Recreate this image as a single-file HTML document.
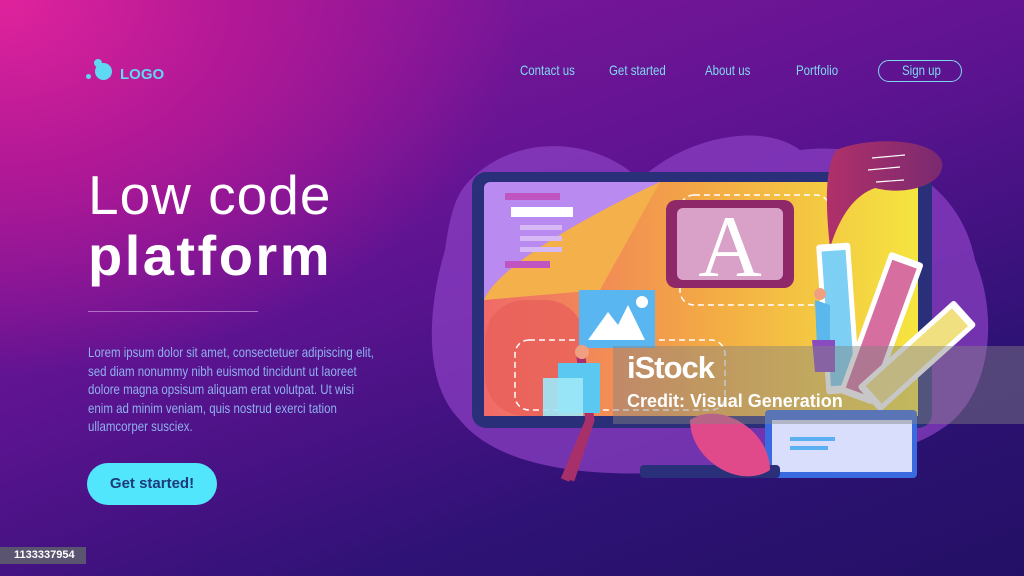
<!DOCTYPE html>
<html><head><meta charset="utf-8"><style>
*{margin:0;padding:0;box-sizing:border-box}
body{width:1024px;height:576px;overflow:hidden;position:relative;font-family:"Liberation Sans",sans-serif;
background:radial-gradient(ellipse 700px 500px at 0 0,#e0239c 0%,#b01896 35%,rgba(110,20,150,0) 75%),linear-gradient(160deg,#8a189e 0%,#5c1390 45%,#2e1275 75%,#231065 100%);}
.a{position:absolute}
.nav{color:#7fd8f0;font-size:14px;top:62px}
.cond{transform-origin:0 0;transform:scaleX(.82);white-space:nowrap}
</style></head><body>
<!-- logo -->
<div class="a" style="left:86px;top:74px;width:5px;height:5px;border-radius:50%;background:#5fd8f4"></div>
<div class="a" style="left:94px;top:59px;width:8px;height:8px;border-radius:50%;background:#5fd8f4"></div>
<div class="a" style="left:95px;top:63px;width:17px;height:17px;border-radius:50%;background:#5fd8f4"></div>
<div class="a" style="left:120px;top:66px;color:#5fd8f4;font-size:15px;font-weight:bold">LOGO</div>
<!-- nav -->
<div class="a nav cond" style="left:520px">Contact us</div>
<div class="a nav cond" style="left:609px">Get started</div>
<div class="a nav cond" style="left:705px">About us</div>
<div class="a nav cond" style="left:796px">Portfolio</div>
<div class="a" style="left:878px;top:60px;width:84px;height:22px;border:1.5px solid #7fd8f0;border-radius:11px"></div>
<div class="a nav cond" style="left:902px">Sign up</div>
<!-- hero -->
<div class="a" style="left:88px;top:165px;color:#fff;font-size:55px;font-weight:300;line-height:60px;letter-spacing:1px">Low code</div>
<div class="a" style="left:88px;top:226px;color:#fff;font-size:56px;font-weight:bold;line-height:60px;letter-spacing:2.5px">platform</div>
<div class="a" style="left:88px;top:311px;width:170px;height:1px;background:#b070c8"></div>
<div class="a cond" style="left:88px;top:343px;color:#8fb0ee;font-size:14px;line-height:18.5px;">Lorem ipsum dolor sit amet, consectetuer adipiscing elit,<br>sed diam nonummy nibh euismod tincidunt ut laoreet<br>dolore magna opsisum aliquam erat volutpat. Ut wisi<br>enim ad minim veniam, quis nostrud exerci tation<br>ullamcorper susciex.</div>
<div class="a" style="left:87px;top:463px;width:130px;height:42px;border-radius:21px;background:#52e6fc;color:#1d3a7a;font-weight:bold;font-size:15px;text-align:center;line-height:42px">Get started!</div>
<div class="a" style="left:0;top:547px;width:86px;height:17px;background:#5a5470;color:#fff;font-size:11px;font-weight:bold;line-height:17px;padding-left:14px">1133337954</div>
<!-- illustration -->
<svg class="a" style="left:0;top:0" width="1024" height="576" viewBox="0 0 1024 576">
<defs><linearGradient id="g1" x1="0" y1="0" x2="1" y2="0"><stop offset="0" stop-color="#f06a6a"/><stop offset=".5" stop-color="#f3a845"/><stop offset="1" stop-color="#f5e540"/></linearGradient>
<linearGradient id="g2" x1="0" y1="0" x2="1" y2="0"><stop offset="0" stop-color="#b0306a"/><stop offset="1" stop-color="#7a2a70"/></linearGradient></defs>
<path d="M470 180 C520 130 600 140 640 180 C680 140 760 120 800 150 C880 140 960 180 975 260 C1000 320 990 400 940 430 C880 470 780 460 700 470 C600 480 500 470 460 420 C420 380 430 300 445 250 C450 215 455 195 470 180Z" fill="#8a3fc2" opacity=".75"/>
<rect x="472" y="172" width="460" height="256" rx="14" fill="#2a2f7a"/>
<rect x="484" y="182" width="434" height="234" rx="6" fill="#b98af0"/>
<path d="M660 182 L918 182 L918 416 L484 416 L484 300 Z" fill="url(#g1)"/>
<path d="M484 300 C500 260 620 200 660 182 L600 290 Z" fill="#f4b04a"/>
<rect x="505" y="193" width="55" height="7" fill="#c054c0"/>
<rect x="511" y="207" width="62" height="10" fill="#fff"/>
<rect x="520" y="225" width="42" height="5" fill="#d6b8f5"/><rect x="520" y="236" width="42" height="5" fill="#d6b8f5"/><rect x="520" y="247" width="42" height="5" fill="#d6b8f5"/>
<rect x="505" y="261" width="45" height="7" fill="#c054c0"/>
<rect x="485" y="300" width="100" height="116" rx="40" fill="#e8605a" opacity=".8"/>
<rect x="680" y="195" width="150" height="110" rx="14" fill="none" stroke="#fff" stroke-dasharray="6 4" stroke-width="1.5"/>
<rect x="515" y="340" width="210" height="70" rx="14" fill="none" stroke="#fff" stroke-dasharray="6 4" stroke-width="1.5"/>
<rect x="666" y="200" width="128" height="88" rx="10" fill="#8e2868"/>
<rect x="677" y="208" width="106" height="72" rx="6" fill="#d9a0c8"/>
<text x="730" y="276" font-family="Liberation Serif,serif" font-size="88" fill="#fff" text-anchor="middle">A</text>
<rect x="579" y="290" width="76" height="58" fill="#59b6f0"/>
<path d="M588 340 L608 312 L618 325 L628 305 L645 340Z" fill="#fff"/><circle cx="642" cy="302" r="6" fill="#fff"/>
<path d="M836 150 C870 136 935 138 942 162 C946 185 905 196 875 188 C855 195 840 215 830 248 C826 210 824 170 836 150Z" fill="url(#g2)"/>
<path d="M872 158 L905 155 M868 170 L900 167 M876 182 L904 180" stroke="#fff" stroke-width="1.2"/>
<g transform="rotate(-4 845 300)"><rect x="820" y="243" width="34" height="150" rx="3" fill="#fff"/><rect x="825" y="250" width="24" height="135" fill="#7dcff3"/></g>
<g transform="rotate(20 890 310)"><rect x="870" y="255" width="36" height="150" rx="3" fill="#fff"/><rect x="875" y="262" width="26" height="136" fill="#d66ea0"/></g>
<g transform="rotate(48 925 350)"><rect x="907" y="295" width="34" height="130" rx="3" fill="#fff"/><rect x="912" y="302" width="24" height="116" fill="#f0e080"/></g>
<rect x="765" y="410" width="152" height="68" rx="4" fill="#3a6ae0"/><rect x="772" y="420" width="140" height="52" fill="#d8defc"/>
<rect x="790" y="437" width="45" height="4" fill="#5ab0f0"/><rect x="790" y="446" width="38" height="4" fill="#5ab0f0"/>
<rect x="640" y="465" width="140" height="13" rx="4" fill="#2a2f7a"/>
<path d="M690 420 C720 400 770 430 770 470 C740 490 690 460 690 420Z" fill="#e04a8a"/>
<path d="M580 350 L590 420 L570 480 M590 420 L565 480" stroke="#a8306a" stroke-width="9" fill="none"/>
<rect x="558" y="363" width="42" height="50" fill="#5ac8f0"/>
<rect x="543" y="378" width="40" height="38" fill="#9ee8f8" opacity=".9"/>
<circle cx="582" cy="352" r="7" fill="#f0a080"/>
<path d="M815 300 L830 305 L830 370 L818 372 Z" fill="#5ab8ec"/><path d="M812 340 L835 340 L835 372 L815 372Z" fill="#8a4ac0"/>
<circle cx="820" cy="294" r="6" fill="#f0a080"/>
</svg>
<!-- watermark -->
<div class="a" style="left:613px;top:346px;width:411px;height:78px;background:rgba(130,130,130,.45)"></div>
<div class="a" style="left:627px;top:350px;color:#fff;font-size:31px;font-weight:bold;letter-spacing:-1px">iStock</div>
<div class="a" style="left:627px;top:391px;color:#fff;font-size:18px;font-weight:bold">Credit: Visual Generation</div>
</body></html>
